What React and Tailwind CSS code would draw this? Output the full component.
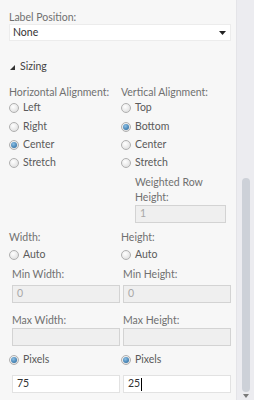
import {useState} from "react";

function Radio({checked}) {
    return (
        <span className="relative inline-flex h-[10px] w-[10px] shrink-0 items-center justify-center rounded-full border border-[#b0b0b0] bg-[radial-gradient(circle_at_40%_35%,#ffffff,#d8d8d8)]">
            {checked && <span className="h-[6px] w-[6px] rounded-full bg-[radial-gradient(circle_at_40%_35%,#8cc0e6,#1d5f95)]" />}
        </span>
    );
}

function RadioRow({label, checked, className = ""}) {
    return (
        <div className={`flex h-[18px] items-center gap-[4px] text-[#5a5a5a] ${className}`}>
            <Radio checked={checked} />
            <span>{label}</span>
        </div>
    );
}

function Label({children, className = ""}) {
    return <div className={`h-[14px] whitespace-nowrap leading-[14px] text-[#707070] ${className}`}>{children}</div>;
}

function Box({value, disabled, cursor}) {
    return (
        <div
            className={`flex h-[18px] items-center border px-[4px] ${
                disabled ? "border-[#d3d3d3] bg-[#efefef] text-[#a8a8a8]" : "border-[#e2e2e2] bg-white text-[#333]"
            }`}
        >
            <span>{value}</span>
            {cursor && <span className="ml-[1px] h-[13px] w-px bg-black" />}
        </div>
    );
}

export default function App() {
    const [labelPos] = useState("None");

    return (
        <div className="flex h-[400px] w-[254px] overflow-hidden font-['Lato',sans-serif] text-[10.5px]">
            <div className="w-[236px] bg-[#f7f7f7] pt-[10px]">
                <Label className="pl-[9px]">Label Position:</Label>
                <div className="ml-[9px] flex h-[17px] w-[222px] items-center justify-between border border-[#ececec] bg-white pl-[3px] pr-[4px] text-[#333]">
                    <span>{labelPos}</span>
                    <svg width="7" height="4" viewBox="0 0 7 4">
                        <path d="M0 0H7L3.5 4Z" fill="#222" />
                    </svg>
                </div>

                <div className="mt-[19px] flex h-[14px] items-center gap-[5px] pl-[10px] text-[#444]">
                    <svg width="5" height="5" viewBox="0 0 5 5">
                        <path d="M5 0V5H0Z" fill="#333" />
                    </svg>
                    <span>Sizing</span>
                </div>

                <div className="mt-[11px] grid grid-cols-[112px_1fr] pl-[9px]">
                    <div>
                        <Label>Horizontal Alignment:</Label>
                        <RadioRow label="Left" />
                        <RadioRow label="Right" className="h-[19px]" />
                        <RadioRow label="Center" checked />
                        <RadioRow label="Stretch" />
                    </div>
                    <div>
                        <Label>Vertical Alignment:</Label>
                        <RadioRow label="Top" />
                        <RadioRow label="Bottom" checked className="h-[19px]" />
                        <RadioRow label="Center" />
                        <RadioRow label="Stretch" />
                        <div className="mt-[3px] pl-[14px] leading-[15px] text-[#707070]">
                            <div>Weighted Row</div>
                            <div>Height:</div>
                        </div>
                        <div className="ml-[14px] w-[91px]">
                            <Box value="1" disabled />
                        </div>
                    </div>
                </div>

                <div className="mt-[7px] grid grid-cols-[112px_1fr] pl-[9px]">
                    <div>
                        <Label>Width:</Label>
                        <RadioRow label="Auto" className="mt-[2px]" />
                    </div>
                    <div>
                        <Label>Height:</Label>
                        <RadioRow label="Auto" className="mt-[2px]" />
                    </div>
                </div>

                <div className="mt-[3px] grid grid-cols-[108px_108px] gap-x-[3px] pl-[12px]">
                    <Label>Min Width:</Label>
                    <Label>Min Height:</Label>
                    <div className="col-span-2 mt-[4px] grid grid-cols-subgrid">
                        <Box value="0" disabled />
                        <Box value="0" disabled />
                    </div>
                    <Label className="mt-[10px]">Max Width:</Label>
                    <Label className="mt-[10px]">Max Height:</Label>
                    <div className="col-span-2 mt-[1px] grid grid-cols-subgrid">
                        <Box value="" disabled />
                        <Box value="" disabled />
                    </div>
                </div>

                <div className="mt-[5px] grid grid-cols-[112px_1fr] pl-[9px]">
                    <RadioRow label="Pixels" checked />
                    <RadioRow label="Pixels" checked />
                </div>

                <div className="mt-[6px] grid grid-cols-[108px_108px] gap-x-[3px] pl-[12px]">
                    <Box value="75" />
                    <Box value="25" cursor />
                </div>
            </div>

            <div className="flex w-[18px] flex-col items-center border-l border-[#e4e4e8] bg-[#ececf0]">
                <div className="h-[178px]" />
                <div className="h-[214px] w-[8px] rounded-[4px] bg-[#cdd1d8]" />
                <svg width="6" height="4" viewBox="0 0 6 4" className="mt-[2px]">
                    <path d="M0 0H6L3 4Z" fill="#7a7a7a" />
                </svg>
            </div>
        </div>
    );
}
